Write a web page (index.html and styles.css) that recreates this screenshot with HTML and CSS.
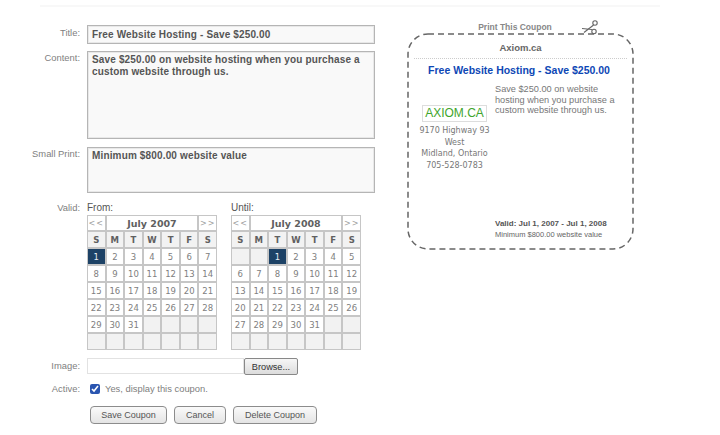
FILE: index.html
```html
<!DOCTYPE html>
<html lang="en">

<head>
    <meta charset="UTF-8">
    <title>Edit Coupon</title>
    <link rel="stylesheet" href="styles.css">
</head>

<body>
    <div class="top-rule"></div>
    <div class="page">
        <form class="coupon-form">
            <div class="row row-title">
                <label class="field-label">Title:</label>
                <input class="text-field title-field" type="text" value="Free Website Hosting - Save $250.00">
            </div>
            <div class="row row-content">
                <label class="field-label">Content:</label>
                <textarea class="text-field content-field">Save $250.00 on website hosting when you purchase a custom website through us.</textarea>
            </div>
            <div class="row row-small">
                <label class="field-label">Small Print:</label>
                <textarea class="text-field small-field">Minimum $800.00 website value</textarea>
            </div>
            <div class="row row-valid">
                <label class="field-label">Valid:</label>
                <div class="calendars">
                    <div class="cal-wrap">
                        <div class="cal-title">From:</div>
                        <div class="calendar">
                            <div class="cal-nav">&lt;&lt;</div>
                            <div class="cal-month">July 2007</div>
                            <div class="cal-nav">&gt;&gt;</div>
                            <div class="cal-dow">S</div><div class="cal-dow">M</div><div class="cal-dow">T</div><div class="cal-dow">W</div><div class="cal-dow">T</div><div class="cal-dow">F</div><div class="cal-dow">S</div>
                            <div class="cal-day selected">1</div><div class="cal-day">2</div><div class="cal-day">3</div><div class="cal-day">4</div><div class="cal-day">5</div><div class="cal-day">6</div><div class="cal-day">7</div>
                            <div class="cal-day">8</div><div class="cal-day">9</div><div class="cal-day">10</div><div class="cal-day">11</div><div class="cal-day">12</div><div class="cal-day">13</div><div class="cal-day">14</div>
                            <div class="cal-day">15</div><div class="cal-day">16</div><div class="cal-day">17</div><div class="cal-day">18</div><div class="cal-day">19</div><div class="cal-day">20</div><div class="cal-day">21</div>
                            <div class="cal-day">22</div><div class="cal-day">23</div><div class="cal-day">24</div><div class="cal-day">25</div><div class="cal-day">26</div><div class="cal-day">27</div><div class="cal-day">28</div>
                            <div class="cal-day">29</div><div class="cal-day">30</div><div class="cal-day">31</div><div class="cal-empty"></div><div class="cal-empty"></div><div class="cal-empty"></div><div class="cal-empty"></div>
                            <div class="cal-empty"></div><div class="cal-empty"></div><div class="cal-empty"></div><div class="cal-empty"></div><div class="cal-empty"></div><div class="cal-empty"></div><div class="cal-empty"></div>
                        </div>
                    </div>
                    <div class="cal-wrap">
                        <div class="cal-title">Until:</div>
                        <div class="calendar">
                            <div class="cal-nav">&lt;&lt;</div>
                            <div class="cal-month">July 2008</div>
                            <div class="cal-nav">&gt;&gt;</div>
                            <div class="cal-dow">S</div><div class="cal-dow">M</div><div class="cal-dow">T</div><div class="cal-dow">W</div><div class="cal-dow">T</div><div class="cal-dow">F</div><div class="cal-dow">S</div>
                            <div class="cal-empty"></div><div class="cal-empty"></div><div class="cal-day selected">1</div><div class="cal-day">2</div><div class="cal-day">3</div><div class="cal-day">4</div><div class="cal-day">5</div>
                            <div class="cal-day">6</div><div class="cal-day">7</div><div class="cal-day">8</div><div class="cal-day">9</div><div class="cal-day">10</div><div class="cal-day">11</div><div class="cal-day">12</div>
                            <div class="cal-day">13</div><div class="cal-day">14</div><div class="cal-day">15</div><div class="cal-day">16</div><div class="cal-day">17</div><div class="cal-day">18</div><div class="cal-day">19</div>
                            <div class="cal-day">20</div><div class="cal-day">21</div><div class="cal-day">22</div><div class="cal-day">23</div><div class="cal-day">24</div><div class="cal-day">25</div><div class="cal-day">26</div>
                            <div class="cal-day">27</div><div class="cal-day">28</div><div class="cal-day">29</div><div class="cal-day">30</div><div class="cal-day">31</div><div class="cal-empty"></div><div class="cal-empty"></div>
                            <div class="cal-empty"></div><div class="cal-empty"></div><div class="cal-empty"></div><div class="cal-empty"></div><div class="cal-empty"></div><div class="cal-empty"></div><div class="cal-empty"></div>
                        </div>
                    </div>
                </div>
            </div>
            <div class="row row-image">
                <label class="field-label">Image:</label>
                <div class="file-box"></div>
                <button class="browse-btn" type="button">Browse...</button>
            </div>
            <div class="row row-active">
                <label class="field-label">Active:</label>
                <input class="active-check" type="checkbox" checked>
                <span class="active-text">Yes, display this coupon.</span>
            </div>
            <div class="actions">
                <button class="action-btn btn-save" type="button">Save Coupon</button>
                <button class="action-btn btn-cancel" type="button">Cancel</button>
                <button class="action-btn btn-delete" type="button">Delete Coupon</button>
            </div>
        </form>

        <div class="coupon-side">
            <div class="print-head">
                <span class="print-link">Print This Coupon</span>
            </div>
            <div class="coupon">
                <svg class="coupon-outline" width="227" height="217" viewBox="0 0 227 217">
                    <rect x="1" y="1" width="225" height="215" rx="20" fill="none" stroke="#666" stroke-width="1.5" stroke-dasharray="6 4"/>
                </svg>
                <svg class="scissors" width="18" height="16" viewBox="0 0 18 16">
                    <circle cx="14" cy="4" r="2.2" fill="none" stroke="#666" stroke-width="1.1"/>
                    <circle cx="13" cy="12.5" r="2.2" fill="none" stroke="#666" stroke-width="1.1"/>
                    <path d="M1 9.5 L11 10.5 M3 13.5 L12.6 6" fill="none" stroke="#666" stroke-width="1.1"/>
                </svg>
                <div class="coupon-company">Axiom.ca</div>
                <div class="coupon-title">Free Website Hosting - Save $250.00</div>
                <div class="coupon-body">
                    <div class="coupon-address">
                        <div class="logo">AXIOM.CA</div>
                        <p>9170 Highway 93 West<br>Midland, Ontario<br>705-528-0783</p>
                    </div>
                    <p class="coupon-text">Save $250.00 on website hosting when you purchase a custom website through us.</p>
                </div>
                <div class="coupon-foot">
                    <div class="coupon-valid">Valid: Jul 1, 2007 - Jul 1, 2008</div>
                    <div class="coupon-min">Minimum $800.00 website value</div>
                </div>
            </div>
        </div>
    </div>
</body>

</html>
```

FILE: styles.css
```css
body {
    margin: 0;
    background: #fff;
    font-family: 'Liberation Sans', Arial, sans-serif;
    font-size: 10px;
    color: #666;
    overflow: hidden;
}

.top-rule {
    height: 2px;
    margin: 5px 60px 0 40px;
    background: #f8f8f8;
}

.page {
    display: flex;
    align-items: flex-start;
}

/* form side */
.coupon-form {
    width: 407px;
    padding-top: 18px;
}

.row {
    display: flex;
    align-items: flex-start;
}

.field-label {
    width: 80px;
    margin-right: 7px;
    padding-top: 2px;
    text-align: right;
    color: #808080;
    font-size: 9.4px;
    flex: none;
}

.text-field {
    display: block;
    box-sizing: border-box;
    width: 288px;
    margin: 0;
    padding: 2px 4px;
    border: 1px solid #b5b5b5;
    box-shadow: inset 0 0 0 1px #e8e8e8;
    background: #f9f9f9;
    font-family: 'Liberation Sans', Arial, sans-serif;
    font-size: 10px;
    font-weight: bold;
    letter-spacing: 0.15px;
    line-height: 11.5px;
    color: #555;
    resize: none;
    outline: none;
    overflow: hidden;
}

.title-field {
    height: 19px;
}

.content-field {
    height: 88px;
}

.small-field {
    height: 46px;
}

.row-content {
    margin-top: 7px;
}

.row-content .field-label,
.row-small .field-label {
    padding-top: 1px;
}

.row-small {
    margin-top: 8px;
}

.row-valid {
    margin-top: 9px;
}

.row-valid .field-label {
    padding-top: 0;
}

.calendars {
    display: flex;
    gap: 14px;
}

.cal-wrap {
    width: 130px;
}

.cal-title {
    height: 13px;
    font-size: 10px;
    line-height: 11px;
    color: #555;
}

.calendar {
    display: grid;
    grid-template-columns: repeat(7, 1fr);
    grid-template-rows: 14px;
    grid-auto-rows: 15px;
    gap: 2px;
    padding: 1px;
    background: #c6c6c6;
    font-family: 'DejaVu Sans', Verdana, sans-serif;
    font-size: 8.5px;
}

.calendar div {
    display: flex;
    align-items: center;
    justify-content: center;
    background: #fff;
    color: #808080;
}

.calendar .cal-nav {
    color: #a0a0a0;
    font-size: 8px;
    letter-spacing: 1px;
}

.calendar .cal-month {
    grid-column: span 5;
    font-size: 9.5px;
    font-weight: bold;
    color: #606060;
}

.calendar .cal-dow {
    background: #f2f2f2;
    font-weight: bold;
    color: #606060;
}

.calendar .cal-empty {
    background: #f2f2f2;
}

.calendar .selected {
    background: #1d4266;
    color: #e8eef4;
}

.row-image {
    margin-top: 8px;
}

.file-box {
    width: 157px;
    height: 16px;
    box-sizing: border-box;
    border: 1px solid #e2e2e2;
    background: #fff;
}

.browse-btn {
    width: 54px;
    height: 17px;
    padding: 0;
    box-sizing: border-box;
    border: 1px solid #888;
    border-radius: 2px;
    background: linear-gradient(#f6f6f6, #dcdcdc);
    font-family: 'Liberation Sans', Arial, sans-serif;
    font-size: 9.2px;
    color: #333;
}

.row-active {
    margin-top: 8px;
    align-items: center;
}

.row-active .field-label {
    padding-top: 0;
}

.active-check {
    width: 10px;
    height: 10px;
    margin: 0 5px 0 3px;
    accent-color: #2a55b0;
}

.active-text {
    font-size: 9.4px;
    color: #808080;
}

.actions {
    display: flex;
    gap: 7px;
    margin: 12px 0 0 90px;
}

.action-btn {
    height: 18px;
    padding: 0;
    box-sizing: border-box;
    border: 1px solid #8c8c8c;
    border-radius: 4px;
    background: linear-gradient(#fafafa, #e4e4e4);
    font-family: 'Liberation Sans', Arial, sans-serif;
    font-size: 9px;
    color: #555;
}

.btn-save {
    width: 77px;
}

.btn-cancel {
    width: 52px;
}

.btn-delete {
    width: 84px;
}

/* coupon preview */
.coupon-side {
    width: 227px;
    padding-top: 15px;
}

.print-head {
    height: 11px;
    margin-left: -11px;
    text-align: center;
    line-height: 11px;
    font-size: 8.5px;
    font-weight: bold;
    color: #888;
}

.coupon {
    position: relative;
    display: flex;
    flex-direction: column;
    box-sizing: border-box;
    height: 217px;
    padding: 9px 7px 11px;
}

.coupon-outline {
    position: absolute;
    left: 0;
    top: 0;
}

.scissors {
    position: absolute;
    left: 174px;
    top: -14px;
}

.coupon-company {
    padding-bottom: 5px;
    border-bottom: 1px dotted #ccc;
    text-align: center;
    font-size: 9.5px;
    font-weight: bold;
    color: #666;
}

.coupon-title {
    margin: 5px 3px 0 0;
    text-align: center;
    font-size: 10.5px;
    font-weight: bold;
    color: #0d47b5;
}

.coupon-body {
    display: flex;
    margin-top: 8px;
}

.coupon-address {
    width: 81px;
    padding-top: 21px;
    flex: none;
    text-align: center;
}

.logo {
    box-sizing: border-box;
    width: 65px;
    height: 17px;
    margin: 0 auto;
    border: 1px solid #ddd;
    font-size: 12px;
    line-height: 15px;
    color: #3fa52c;
}

.coupon-address p {
    margin: 3px 0 0;
    font-family: 'DejaVu Sans', Verdana, sans-serif;
    font-size: 8px;
    line-height: 11.5px;
    color: #777;
}

.coupon-text {
    width: 122px;
    margin: 0;
    font-size: 9.2px;
    line-height: 10.5px;
    color: #777;
}

.coupon-foot {
    margin: auto 0 0 81px;
}

.coupon-valid {
    font-size: 8px;
    font-weight: bold;
    color: #555;
}

.coupon-min {
    margin-top: 2px;
    font-size: 7.5px;
    color: #666;
}
```
